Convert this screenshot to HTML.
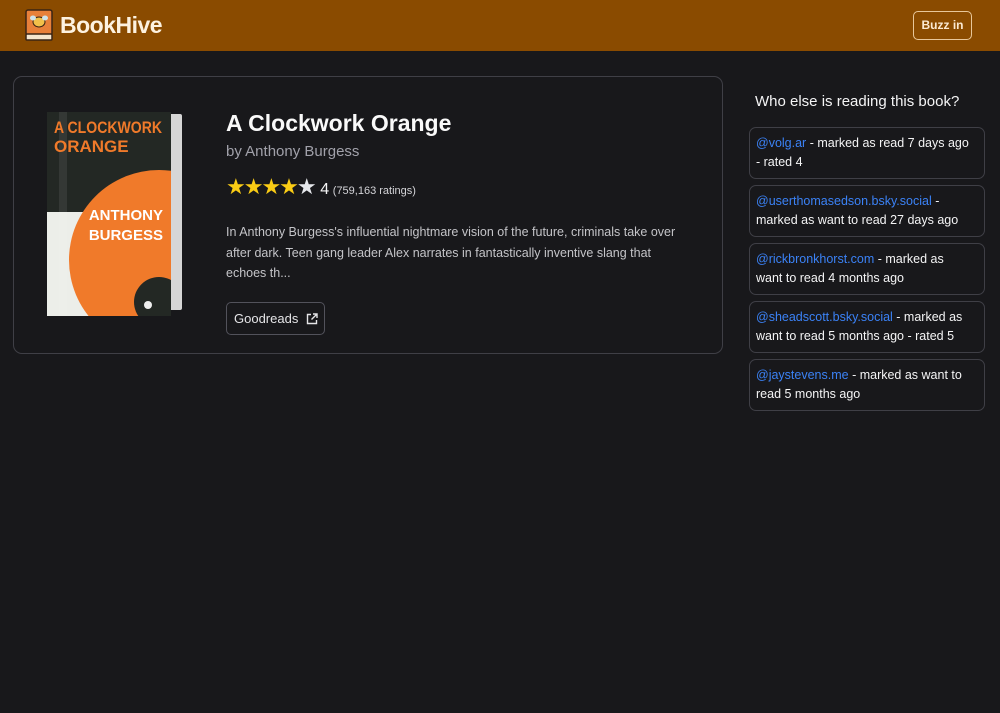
<!DOCTYPE html>
<html><head><style>
*{box-sizing:border-box;margin:0;padding:0}
body{width:1000px;height:713px;background:#18181b;font-family:"Liberation Sans",sans-serif;color:#f4f4f5;position:relative;overflow:hidden}
.hdr{position:absolute;left:0;top:0;width:1000px;height:51px;background:#8a4b00}
.logo{position:absolute;left:60px;top:12px;font-size:23px;font-weight:bold;color:#fdf2e0;letter-spacing:-0.5px}
.buzz{position:absolute;left:913px;top:11px;width:59px;height:29px;border:1.5px solid #e8c79a;border-radius:5px;color:#fbe9d2;font-size:12px;font-weight:bold;text-align:center;line-height:26px}
.card{position:absolute;left:13px;top:76px;width:710px;height:278px;border:1px solid #3f3f46;border-radius:9px}
.t{position:absolute;left:226px;top:110px;font-size:23px;font-weight:bold;color:#fafafa}
.by{position:absolute;left:226px;top:143px;font-size:15px;color:#a1a1aa}
.stars{position:absolute;left:226px;top:174px;font-size:13px;color:#d4d4d8}
.desc{position:absolute;left:226px;top:222px;width:455px;font-size:12.5px;line-height:20.5px;color:#c4c4c8}
.gr{position:absolute;left:226px;top:302px;width:99px;height:33px;border:1px solid #52525b;border-radius:5px;font-size:13px;line-height:31px;padding-left:7px;color:#e4e4e7}
.side h3{position:absolute;left:755px;top:93px;font-size:15px;font-weight:normal;color:#f4f4f5}
.it{position:absolute;left:749px;width:236px;height:52px;border:1px solid #3f3f46;border-radius:7px;padding:6px 14px 6px 6px;font-size:12.5px;line-height:19px;color:#f4f4f5}
.it a{color:#3b82f6;text-decoration:none}
</style></head><body>
<div class="hdr">
<svg style="position:absolute;left:25px;top:9px" width="29" height="32" viewBox="0 0 29 32"><rect x="1" y="1" width="26" height="25" rx="2" fill="#e8803a" stroke="#3a2414" stroke-width="1.5"/><rect x="1" y="25" width="26" height="6" rx="1" fill="#f5e6cf" stroke="#3a2414" stroke-width="1.5"/><ellipse cx="14" cy="13" rx="6" ry="5" fill="#f2c04a" stroke="#3a2414"/><ellipse cx="8" cy="9" rx="3" ry="2.5" fill="#cfe3ea"/><ellipse cx="20" cy="9" rx="3" ry="2.5" fill="#cfe3ea"/></svg>
<div class="logo">BookHive</div>
<div class="buzz">Buzz in</div>
</div>
<div class="card"></div>
<svg style="position:absolute;left:47px;top:112px" width="140" height="205" viewBox="0 0 140 205">
<defs><clipPath id="c"><rect x="0" y="0" width="124" height="204"/></clipPath></defs>
<rect x="121" y="2" width="14" height="196" rx="2" fill="#d6d6d6"/>
<g clip-path="url(#c)">
<rect x="0" y="0" width="124" height="204" fill="#232824"/>
<rect x="0" y="100" width="60" height="104" fill="#eceee9"/>
<circle cx="112" cy="148" r="90" fill="#f07a2a"/>
<circle cx="112" cy="190" r="25" fill="#232824"/>
<circle cx="101" cy="193" r="4" fill="#eee"/>
<rect x="12" y="0" width="8" height="204" fill="#ffffff" opacity="0.08"/>
</g>
<text x="7" y="21" font-family="Liberation Sans" font-weight="bold" font-size="17" fill="#f07a2a" textLength="108" lengthAdjust="spacingAndGlyphs">A CLOCKWORK</text>
<text x="7" y="40" font-family="Liberation Sans" font-weight="bold" font-size="17" fill="#f07a2a">ORANGE</text>
<text x="116" y="108" text-anchor="end" font-family="Liberation Sans" font-weight="bold" font-size="15" fill="#fff">ANTHONY</text>
<text x="116" y="128" text-anchor="end" font-family="Liberation Sans" font-weight="bold" font-size="15" fill="#fff">BURGESS</text>
</svg>
<div class="t">A Clockwork Orange</div>
<div class="by">by Anthony Burgess</div>
<div class="stars"><span style="color:#facc15;font-size:22px;letter-spacing:-2px">★★★★</span><span style="color:#e5e7eb;font-size:22px">★</span> <span style="font-size:16px;color:#f4f4f5">4</span> <span style="font-size:11px">(759,163 ratings)</span></div>
<div class="desc">In Anthony Burgess's influential nightmare vision of the future, criminals take over after dark. Teen gang leader Alex narrates in fantastically inventive slang that echoes th...</div>
<div class="gr">Goodreads <svg style="position:absolute;left:79px;top:10px" width="12" height="12" viewBox="0 0 12 12" fill="none" stroke="#e4e4e7" stroke-width="1.4"><path d="M5 1.5H1.5v9h9V7M7 1h4v4M11 1L5.5 6.5"/></svg></div>
<div class="side"><h3>Who else is reading this book?</h3></div>
<div class="it" style="top:127px"><a>@volg.ar</a> - marked as read 7 days ago - rated 4</div>
<div class="it" style="top:185px"><a>@userthomasedson.bsky.social</a> - marked as want to read 27 days ago</div>
<div class="it" style="top:243px"><a>@rickbronkhorst.com</a> - marked as want to read 4 months ago</div>
<div class="it" style="top:301px"><a>@sheadscott.bsky.social</a> - marked as want to read 5 months ago - rated 5</div>
<div class="it" style="top:359px"><a>@jaystevens.me</a> - marked as want to read 5 months ago</div>
</body></html>
